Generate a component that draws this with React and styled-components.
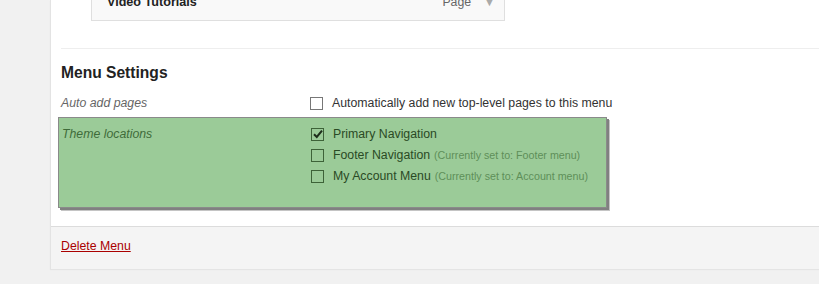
import React from 'react';
import styled, { createGlobalStyle } from 'styled-components';

const GlobalStyle = createGlobalStyle`
  html, body {
    margin: 0;
    padding: 0;
    background: #f1f1f1;
    font-family: "Liberation Sans", Arial, sans-serif;
    font-size: 12.3px;
    color: #333;
  }
`;

const Page = styled.div`
  width: 819px;
  height: 284px;
  overflow: hidden;
  padding-left: 50px;
  box-sizing: border-box;
`;

const Panel = styled.div`
  width: 800px;
  height: 269px;
  background: #fff;
  border-left: 1px solid #e3e3e3;
  box-shadow: 0 1px 1px rgba(0, 0, 0, 0.05);
  display: flex;
  flex-direction: column;
`;

const Body = styled.div`
  flex: 1;
  padding: 0 0 0 10px;
`;

const MenuItem = styled.div`
  margin: -18px 0 0 30px;
  width: 414px;
  height: 39px;
  border: 1px solid #dfdfdf;
  background: #f9f9f9;
  display: flex;
  align-items: center;
  padding: 0 9px 0 15px;
  box-sizing: border-box;
`;

const ItemTitle = styled.span`
  flex: 1;
  font-weight: bold;
  font-size: 12.6px;
  color: #222;
`;

const ItemType = styled.span`
  color: #666;
`;

const Arrow = styled.span`
  margin-left: 13px;
  color: #aaa;
  font-size: 11px;
`;

const Divider = styled.div`
  height: 1px;
  background: #eee;
  margin-top: 27px;
`;

const Title = styled.h3`
  margin: 14px 0 0;
  font-size: 15.6px;
  font-weight: bold;
  color: #222;
  line-height: 20px;
`;

const Row = styled.div`
  display: grid;
  grid-template-columns: 249px 1fr;
  align-items: start;
  margin-top: 12px;
`;

const Highlight = styled.div`
  display: grid;
  grid-template-columns: 249px 1fr;
  align-items: start;
  width: 549px;
  box-sizing: border-box;
  margin: 6px 0 0 -3px;
  padding: 8px 3px 23px 3px;
  background: #9bcb98;
  border: 1px solid #8a8a8a;
  box-shadow: 2px 2px 0 #808080, 3px 3px 0 #c4c4c4;
`;

const Label = styled.span`
  font-style: italic;
  color: ${p => (p.$green ? '#3f6b3a' : '#666')};
  line-height: 16px;
`;

const Options = styled.div`
  display: flex;
  flex-direction: column;
  gap: 5px;
`;

const Option = styled.label`
  display: flex;
  align-items: center;
  gap: 9px;
  height: 16px;
  color: ${p => (p.$green ? '#2a4a25' : '#333')};
`;

const Box = styled.span`
  width: 11px;
  height: 11px;
  border: 1px solid ${p => (p.$green ? '#3d6238' : '#777')};
  background: ${p => (p.$green ? 'transparent' : '#fff')};
  display: flex;
  align-items: center;
  justify-content: center;
  flex-shrink: 0;
`;

const Note = styled.span`
  font-size: 10.7px;
  color: #5e8f59;
  margin-left: 4px;
`;

const Footer = styled.div`
  height: 43px;
  background: #f4f4f4;
  border-top: 1px solid #dcdcdc;
  padding: 11px 0 0 10px;
  box-sizing: border-box;
`;

const DeleteLink = styled.a`
  color: #a00;
  text-decoration: underline;
  line-height: 16px;
`;

const Check = () => (
  <svg width="10" height="10" viewBox="0 0 10 10">
    <path d="M1 5.2 L3.8 8 L9 1.6" fill="none" stroke="#1d2d1a" strokeWidth="2" />
  </svg>
);

const locations = [
  { name: 'Primary Navigation', checked: true },
  { name: 'Footer Navigation', note: '(Currently set to: Footer menu)' },
  { name: 'My Account Menu', note: '(Currently set to: Account menu)' },
];

export default function App() {
  return (
    <>
      <GlobalStyle />
      <Page>
        <Panel>
          <Body>
            <MenuItem>
              <ItemTitle>Video Tutorials</ItemTitle>
              <ItemType>Page</ItemType>
              <Arrow>▼</Arrow>
            </MenuItem>
            <Divider />
            <Title>Menu Settings</Title>
            <Row>
              <Label>Auto add pages</Label>
              <Option>
                <Box />
                Automatically add new top-level pages to this menu
              </Option>
            </Row>
            <Highlight>
              <Label $green>Theme locations</Label>
              <Options>
                {locations.map(l => (
                  <Option key={l.name} $green>
                    <Box $green>{l.checked && <Check />}</Box>
                    <span>
                      {l.name}
                      {l.note && <Note>{l.note}</Note>}
                    </span>
                  </Option>
                ))}
              </Options>
            </Highlight>
          </Body>
          <Footer>
            <DeleteLink href="#">Delete Menu</DeleteLink>
          </Footer>
        </Panel>
      </Page>
    </>
  );
}
